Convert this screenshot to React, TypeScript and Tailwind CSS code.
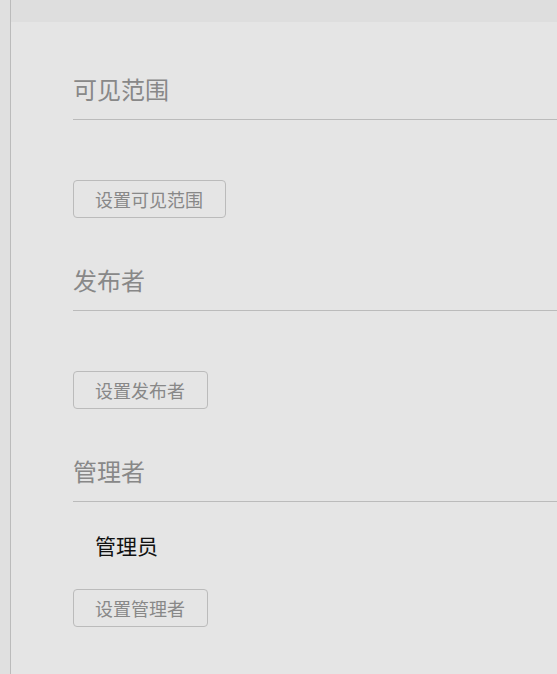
import React from "react";

type Section = {
  title: string;
  action: string;
  members: string[];
};

const sections: Section[] = [
  { title: "可见范围", action: "设置可见范围", members: [] },
  { title: "发布者", action: "设置发布者", members: [] },
  { title: "管理者", action: "设置管理者", members: ["管理员"] },
];

const font = {
  fontFamily: '"Noto Sans CJK SC", "Noto Sans", sans-serif',
};

export default function App() {
  return (
    <div
      className="flex h-[674px] w-[557px] overflow-hidden bg-[#dedede]"
      style={font}
    >
      <div className="w-[11px] shrink-0 border-r border-[#bbbbbb] bg-[#e0e0e0]" />
      <div className="flex min-w-0 flex-1 flex-col bg-[#e5e5e5]">
        <div className="h-[22px] shrink-0 bg-[#dedede]" />
        <div className="flex flex-col pl-[62px] pt-[49px]">
          {sections.map((s) => (
            <SectionBlock key={s.title} {...s} />
          ))}
        </div>
      </div>
    </div>
  );
}

function SectionBlock({ title, action, members }: Section) {
  return (
    <section className="mb-[44px] flex flex-col">
      <h3 className="border-b border-[#bbbbbb] pb-[12px] text-[24px] font-normal leading-[36px] text-[#888888]">
        {title}
      </h3>
      {members.length > 0 ? (
        <div className="flex flex-col px-[22px] pb-[28px] pt-[27px]">
          {members.map((m) => (
            <span key={m} className="text-[21px] leading-[32px] text-[#111111]">
              {m}
            </span>
          ))}
        </div>
      ) : (
        <div className="h-[60px]" />
      )}
      <div>
        <button className="h-[38px] rounded-[4px] border border-[#bbbbbb] pl-[21px] pr-[22px] text-[18px] leading-none text-[#888888]">
          {action}
        </button>
      </div>
    </section>
  );
}
